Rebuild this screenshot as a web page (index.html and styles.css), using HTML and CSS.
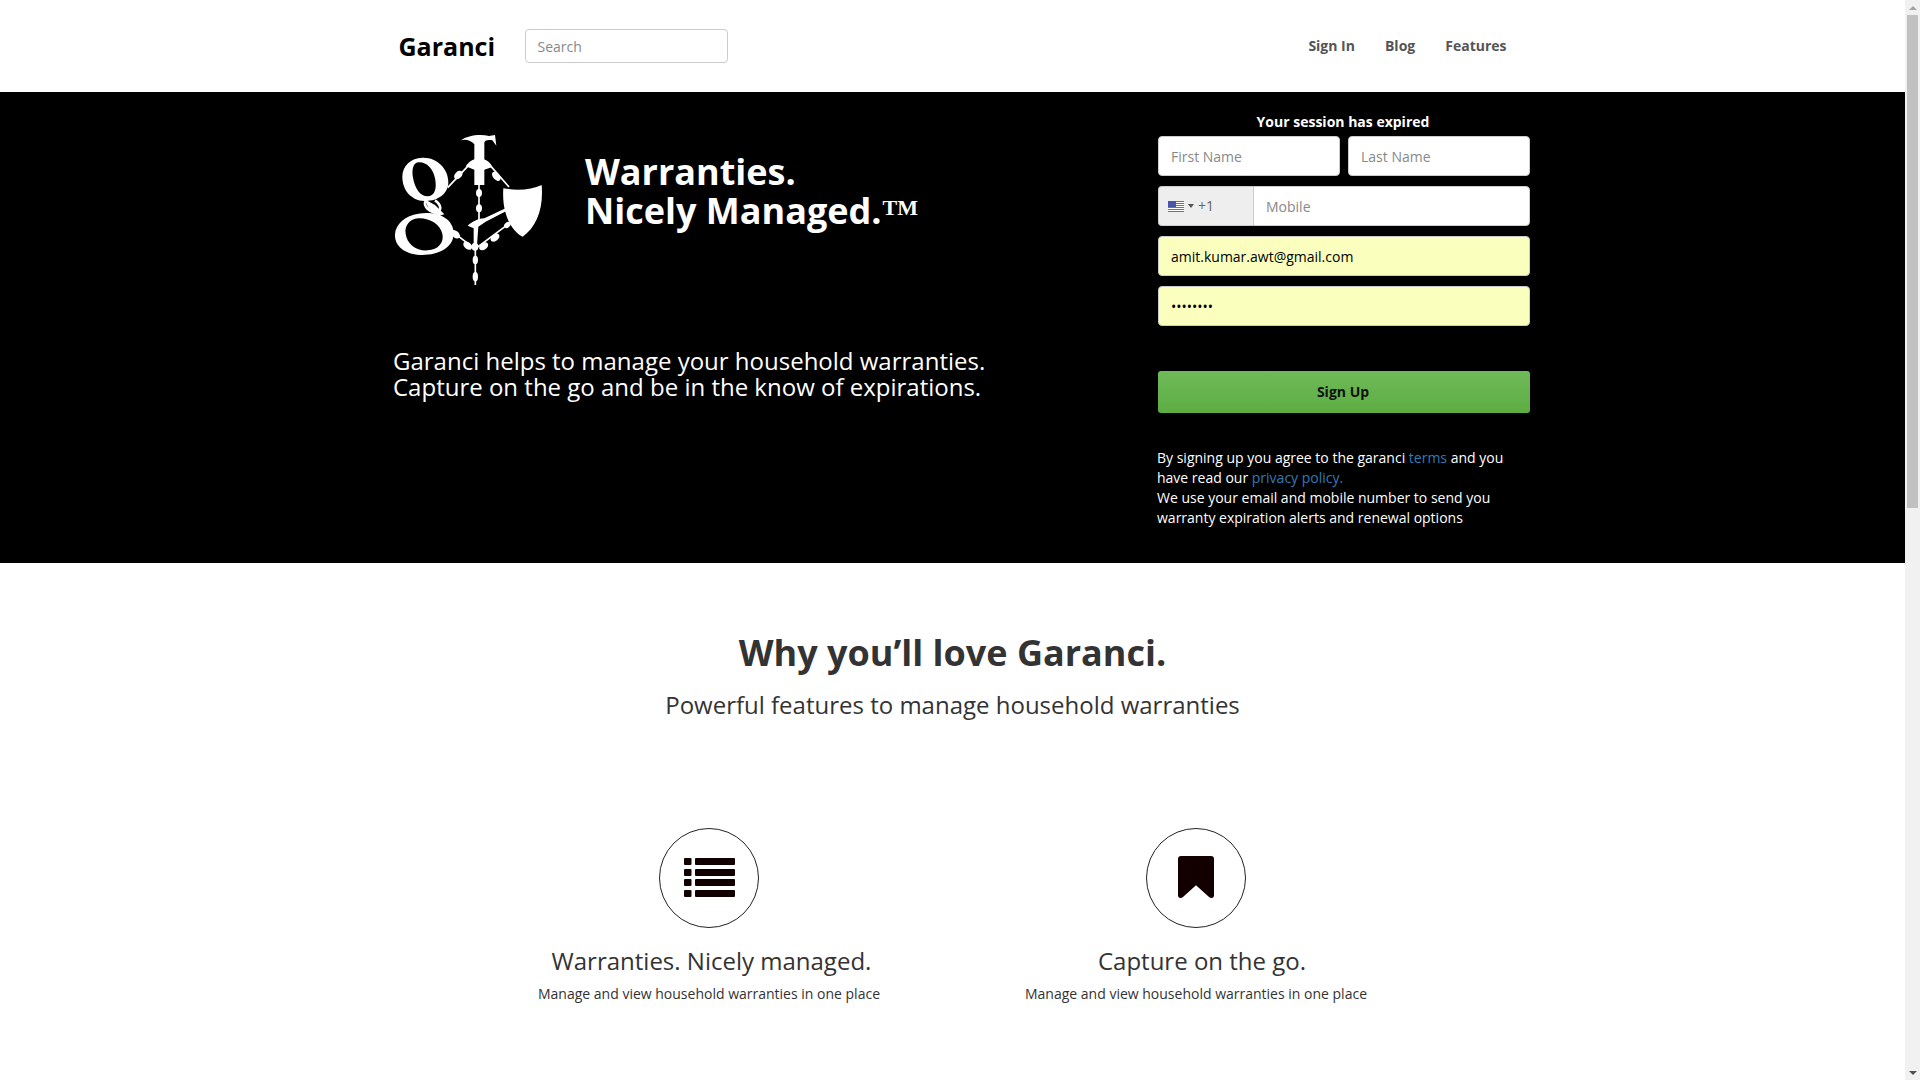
FILE: index.html
```html
<!DOCTYPE html>
<html lang="en">
<head>
    <meta charset="UTF-8">
    <meta name="viewport" content="width=device-width, initial-scale=1.0">
    <title>Garanci</title>
    <link rel="stylesheet" href="styles.css">
</head>
<body>
    <header class="topbar">
        <div class="container topbar-row">
            <a class="brand" href="#">Garanci</a>
            <input class="search" type="text" placeholder="Search">
            <nav class="nav">
                <a href="#">Sign In</a>
                <a href="#">Blog</a>
                <a href="#">Features</a>
            </nav>
        </div>
    </header>

    <section class="hero">
        <div class="container hero-row">
            <div class="hero-left">
                <div class="hero-brand">
                    <svg class="logo" viewBox="0 0 510 495" fill="#fff" stroke="none">
                        <!-- g -->
                        <path fill-rule="evenodd" d="M112 98C155 96 190 130 190 172C190 208 155 230 118 228C78 226 52 195 52 155C52 122 78 99 112 98ZM100 112C84 114 80 134 84 158C90 192 108 216 130 214C150 212 156 190 150 160C144 130 124 110 100 112Z"/>
                        <path fill-rule="evenodd" d="M100 266C165 256 208 285 206 328C204 368 160 392 105 390C58 388 28 362 30 328C32 296 62 272 100 266ZM100 280C74 282 58 302 62 326C66 356 92 378 128 376C160 374 178 352 172 326C166 298 132 278 100 280Z"/>
                        <path fill="none" stroke="#fff" stroke-width="8" d="M126 222C112 238 124 254 150 264C172 258 170 240 150 226"/>
                        <path d="M118 222L150 240L178 268L160 274L130 248Z"/>
                        <!-- hammer -->
                        <path d="M228 46C245 32 285 26 312 33L330 30L334 62L322 46C310 43 300 45 298 52L298 180L268 180L268 58C258 46 242 42 228 46Z"/>
                        <path d="M242 124C254 106 272 100 283 100C295 100 314 108 322 126L298 134L268 134Z"/>
                        <!-- shield -->
                        <path d="M355 190C395 198 440 195 470 180C476 250 455 305 413 335C375 315 350 260 355 190Z"/>
                        <!-- pick -->
                        <path d="M248 302C262 290 280 280 298 280L362 250L364 258L302 290L280 305L276 360L266 360L266 310Z"/>
                        <!-- chains -->
                        <path fill="none" stroke="#fff" stroke-width="5" d="M188 188L248 124M318 124L372 186M282 180L282 285M205 322L270 372L372 296M271 360L271 480"/>
                        <ellipse cx="220" cy="150" rx="10" ry="15" transform="rotate(45 220 150)"/>
                        <ellipse cx="334" cy="154" rx="10" ry="16" transform="rotate(-42 334 154)"/>
                        <ellipse cx="282" cy="204" rx="9" ry="12"/>
                        <ellipse cx="282" cy="250" rx="9" ry="12"/>
                        <ellipse cx="212" cy="328" rx="10" ry="15" transform="rotate(-45 212 328)"/>
                        <ellipse cx="248" cy="362" rx="10" ry="15" transform="rotate(-50 248 362)"/>
                        <ellipse cx="270" cy="365" rx="10" ry="12"/>
                        <ellipse cx="296" cy="364" rx="10" ry="15" transform="rotate(55 296 364)"/>
                        <ellipse cx="330" cy="338" rx="10" ry="15" transform="rotate(52 330 338)"/>
                        <ellipse cx="367" cy="300" rx="8" ry="11" transform="rotate(50 367 300)"/>
                        <ellipse cx="271" cy="405" rx="8" ry="13"/>
                        <ellipse cx="271" cy="455" rx="8" ry="14"/>
                    </svg>
                    <h1 class="hero-title">Warranties.<br>Nicely Managed.<span class="tm">TM</span></h1>
                </div>
                <p class="tagline">Garanci helps to manage your household warranties.<br>Capture on the go and be in the know of expirations.</p>
            </div>

            <form class="signup">
                <div class="signup-title">Your session has expired</div>
                <div class="field-row">
                    <input class="field" type="text" placeholder="First Name">
                    <input class="field" type="text" placeholder="Last Name">
                </div>
                <div class="phone">
                    <div class="phone-code">
                        <svg class="flag" viewBox="0 0 16 11">
                            <rect width="16" height="11" fill="#fff"/>
                            <path d="M0 0h16v1H0zM0 2h16v1H0zM0 4h16v1H0zM0 6h16v1H0zM0 8h16v1H0zM0 10h16v1H0z" fill="#d0485a"/>
                            <rect width="8" height="6" fill="#4a55a8"/>
                        </svg>
                        <span class="caret"></span>
                        <span>+1</span>
                    </div>
                    <input class="field phone-input" type="text" placeholder="Mobile">
                </div>
                <input class="field filled" type="text" value="amit.kumar.awt@gmail.com">
                <input class="field filled" type="password" value="password">
                <button class="btn-signup" type="button">Sign Up</button>
                <p class="terms">By signing up you agree to the garanci <a href="#">terms</a> and you have read our <a href="#">privacy policy.</a><br>We use your email and mobile number to send you warranty expiration alerts and renewal options</p>
            </form>
        </div>
    </section>

    <section class="features">
        <h2>Why you’ll love Garanci.</h2>
        <p class="features-sub">Powerful features to manage household warranties</p>
        <div class="feature-grid">
            <div class="feature">
                <div class="feature-icon">
                    <svg class="icon-list" width="51" height="39" viewBox="0 0 51 39" fill="#120000">
                        <rect x="0" y="0" width="7.5" height="7" rx="1"/><rect x="11" y="0" width="40" height="7" rx="1"/>
                        <rect x="0" y="11" width="7.5" height="7" rx="1"/><rect x="11" y="11" width="40" height="7" rx="1"/>
                        <rect x="0" y="21" width="7.5" height="7" rx="1"/><rect x="11" y="21" width="40" height="7" rx="1"/>
                        <rect x="0" y="32" width="7.5" height="7" rx="1"/><rect x="11" y="32" width="40" height="7" rx="1"/>
                    </svg>
                </div>
                <h3 class="title-a">Warranties. Nicely managed.</h3>
                <p>Manage and view household warranties in one place</p>
            </div>
            <div class="feature">
                <div class="feature-icon">
                    <svg class="icon-list" width="36" height="42" viewBox="0 0 36 43" preserveAspectRatio="none" fill="#120000">
                        <path d="M3 0H33Q36 0 36 3V40Q36 43 33.500 43Q32 43 31 42L18 30L5 42Q4 43 2.500 43Q0 43 0 40V3Q0 0 3 0Z"/>
                    </svg>
                </div>
                <h3 class="title-b">Capture on the go.</h3>
                <p>Manage and view household warranties in one place</p>
            </div>
        </div>
    </section>

    <div class="scrollbar">
        <div class="scroll-btn"><span class="arrow-up"></span></div>
        <div class="scroll-thumb"></div>
        <div class="scroll-btn scroll-btn-down"><span class="arrow-down"></span></div>
    </div>
</body>
</html>
```

FILE: styles.css
```css
body { margin: 0; padding-right: 15px; min-height: 100vh; box-sizing: border-box; background: #fff; color: #333; font-family: "Open Sans", sans-serif; font-size: 14px; line-height: 20px; }
a { text-decoration: none; }
.container { width: 1170px; margin: 0 auto; }

.scrollbar { position: fixed; top: 0; right: 0; bottom: 0; width: 15px; display: flex; flex-direction: column; background: #f1f1f1; }
.scroll-btn { display: flex; align-items: center; justify-content: center; height: 15px; flex: none; }
.scroll-btn-down { margin-top: auto; }
.scroll-thumb { height: 493px; margin: 0 2px; background: #c1c1c1; }
.arrow-up { border: 4px solid transparent; border-top: 0; border-bottom: 4px solid #a3a3a3; }
.arrow-down { border: 4px solid transparent; border-bottom: 0; border-top: 4px solid #505050; }

.topbar { height: 92px; }
.topbar-row { display: flex; align-items: center; height: 92px; padding-left: 31px; padding-right: 31px; box-sizing: border-box; }
.brand { width: 126px; flex: none; color: #000; font-size: 25px; font-weight: 700; }
.search { width: 203px; height: 34px; box-sizing: border-box; padding: 0 12px; border: 1px solid #ccc; border-radius: 4px; font: 14px "Open Sans", sans-serif; }
.search::placeholder, .field::placeholder { color: #888; opacity: 1; }
.nav { display: flex; gap: 30px; margin-left: auto; }
.nav a { color: #555; font-weight: 700; }

.hero { background: #000; color: #fff; }
.hero-row { display: flex; justify-content: space-between; padding: 20px 7.5px 35px 25.5px; box-sizing: border-box; }
.hero-left { padding-top: 13px; }
.hero-brand { display: flex; margin-left: -8px; }
.logo { width: 170px; height: 165px; flex: none; }
.hero-title { margin: 27px 0 0 30px; font-size: 36px; line-height: 39px; font-weight: 700; }
.tm { font-family: "Liberation Serif", serif; font-size: 22px; vertical-align: 9px; line-height: 0; margin-left: 1px; }
.tagline { margin: 58px 0 0; font-size: 24px; line-height: 26px; }

.signup { width: 372px; display: flex; flex-direction: column; gap: 10px; }
.signup-title { margin-bottom: -6px; padding-right: 2px; text-align: center; font-weight: 700; }
.field-row { display: flex; gap: 8px; }
.field { width: 100%; min-width: 0; height: 40px; box-sizing: border-box; padding: 0 12px; border: 1px solid #ccc; border-radius: 4px; background: #fff; color: #000; font: 14px "Open Sans", sans-serif; }
.filled { background: #faffbd; }
.phone { display: flex; }
.phone-code { display: flex; align-items: center; width: 95px; height: 40px; flex: none; box-sizing: border-box; padding-left: 9px; background: #eee; border: 1px solid #ccc; border-right: 0; border-radius: 4px 0 0 4px; color: #666; }
.flag { width: 16px; height: 11px; }
.caret { width: 0; height: 0; margin: 0 4px 0 4px; border: 3px solid transparent; border-top: 4px solid #555; border-bottom: 0; }
.phone-input { border-radius: 0 4px 4px 0; }
.btn-signup { height: 42px; margin-top: 35px; padding: 0 2px 2px 0; border: 0; border-radius: 3px; background: linear-gradient(#6fba59, #5dad42); color: #111; font: 700 14px "Open Sans", sans-serif; }
.terms { margin: 25px 0 0 -1px; }
.terms a { color: #337ab7; }

.features { padding-top: 70px; text-align: center; }
.features h2 { margin: 0; font-size: 36px; line-height: 40px; font-weight: 700; }
.features-sub { margin: 17px 0 0; font-size: 24px; line-height: 30px; }
.feature-grid { display: grid; grid-template-columns: 487px 487px; justify-content: center; margin-top: 108px; }
.feature-icon { display: flex; align-items: center; justify-content: center; width: 100px; height: 100px; margin: 0 auto; box-sizing: border-box; border: 1px solid #222; border-radius: 50%; }
.icon-list { margin-bottom: 2px; }
.feature h3 { margin: 18px 0 0; font-size: 24px; line-height: 30px; font-weight: 400; }
.feature p { margin: 8px 0 0; }
.title-a { padding-left: 5px; }
.title-b { padding-left: 12px; }
```
